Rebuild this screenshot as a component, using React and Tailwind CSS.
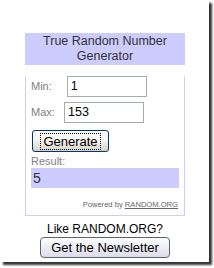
export default function App() {
  return (
    <div className="w-[214px] h-[268px] bg-white overflow-hidden" style={{ fontFamily: '"Liberation Sans", Arial, sans-serif' }}>
      <div className="w-[209px] h-[262px] bg-white shadow-[3px_3px_2px_rgba(0,0,0,0.8)] pt-[33px]">
        <div className="ml-[25px] w-[160px]">
          <div className="bg-[#ccccff] py-[1px] text-center text-[12.5px] leading-[15px] text-[#333]">
            True Random Number Generator
          </div>
          <div className="border-x border-b border-[#ccccff] px-[5px] pb-[5px]">
            <div className="flex items-center mt-[11px]">
              <span className="text-[11px] text-[#808080] w-[20.8px]">Min:</span>
              <div className="ml-[15px] w-[80px] h-[21px] border border-[#a5acb2] pl-[3px] text-[12.6px] leading-[19px] text-black">1</div>
            </div>
            <div className="flex items-center mt-[5px]">
              <span className="text-[11px] text-[#808080] w-[24px]">Max:</span>
              <div className="ml-[9px] w-[80px] h-[21px] border border-[#a5acb2] pl-[3px] text-[12.6px] leading-[19px] text-black">153</div>
            </div>
            <div className="mt-[7px] w-[77px] h-[22px] ml-[1px] rounded-[3px] border border-[#003c74] bg-gradient-to-b from-white via-[#f4f3ee] to-[#d6d0c5] flex items-center justify-center">
              <span className="border border-dotted border-black px-[2px] text-[13px] leading-[15px] text-black">Generate</span>
            </div>
            <div className="mt-[3px] text-[11px] leading-[12px] text-[#808080]">Result:</div>
            <div className="mt-[1px] h-[20px] bg-[#ccccff] pl-[2px] text-[14px] leading-[20px] text-[#333]">5</div>
            <div className="mt-[12px] text-right text-[7.6px] leading-[10px] text-[#666] pr-[1px]">
              Powered by <span className="underline">RANDOM.ORG</span>
            </div>
          </div>
          <div className="mt-[6px] text-center text-[12px] leading-[14px] text-black">Like RANDOM.ORG?</div>
          <div className="mt-[1px] mx-auto w-[130px] h-[21px] rounded-[4px] border border-[#5a6472] bg-gradient-to-b from-white to-[#dcdcea] flex items-center justify-center text-[13px] leading-[15px] text-black">
            Get the Newsletter
          </div>
        </div>
      </div>
    </div>
  )
}
